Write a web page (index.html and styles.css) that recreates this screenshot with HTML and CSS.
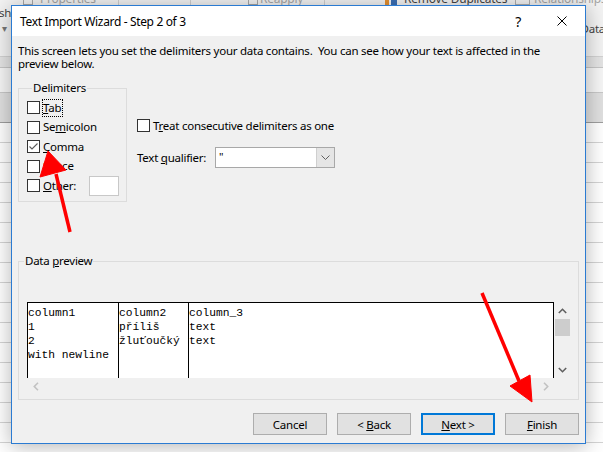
FILE: index.html
```html
<!DOCTYPE html>
<html lang="en">
<head>
<meta charset="utf-8">
<title>Text Import Wizard</title>
<link rel="stylesheet" href="styles.css">
</head>
<body>
<div class="app">
  <div class="ribbon">
    <div class="rb-labels">
      <div class="rb-cell"></div>
      <div class="rb-cell rb-props"><span class="rb-icon ico-gray"></span><span class="dis">Properties</span></div>
      <div class="rb-cell sep"></div>
      <div class="rb-cell sep"></div>
      <div class="rb-cell rb-reapply"><span class="rb-icon ico-gray"></span><span class="dis">Reapply</span></div>
      <div class="rb-cell sep"></div>
      <div class="rb-cell rb-dup"><span class="rb-icon ico-dup"></span><span class="en">Remove Duplicates</span></div>
      <div class="rb-cell rb-rel"><span class="rb-icon ico-rel"></span><span class="dis">Relationships</span></div>
    </div>
    <div class="rb-row2"><span class="rb-text">Refresh</span></div>
    <div class="rb-row3"><span class="rb-drop">&#9662;</span><span class="rb-text">Data</span></div>
  </div>
  <div class="formula"></div>
  <div class="namebar"></div>
  <div class="colhead"></div>
  <div class="grid"></div>
</div>

<div class="dialog">
  <div class="titlebar">
    <span class="title">Text Import Wizard - Step 2 of 3</span>
    <span class="tb-btn help">?</span>
    <span class="tb-btn close"><svg width="10" height="10" viewBox="0 0 10 10"><path d="M0.5 0.5L9.5 9.5M9.5 0.5L0.5 9.5" stroke="#000" stroke-width="1" fill="none"/></svg></span>
  </div>
  <div class="content">
    <p class="desc">This screen lets you set the delimiters your data contains.&nbsp; You can see how your text is affected in the<br>preview below.</p>
    <div class="options">
      <div class="group delims">
        <div class="group-label">Delimiters</div>
        <div class="rows">
          <div class="row"><span class="cb"></span><span class="lbl focus"><u>T</u>ab</span></div>
          <div class="row"><span class="cb"></span><span class="lbl">Se<u>m</u>icolon</span></div>
          <div class="row"><span class="cb"><svg width="11" height="11" viewBox="0 0 11 11"><path d="M1.5 5.5L4 8L9.5 2.5" fill="none" stroke="#5a5a5a" stroke-width="1.1"/></svg></span><span class="lbl"><u>C</u>omma</span></div>
          <div class="row"><span class="cb"></span><span class="lbl">S<u>p</u>ace</span></div>
          <div class="row"><span class="cb"></span><span class="lbl"><u>O</u>ther:</span><span class="textbox"></span></div>
        </div>
      </div>
      <div class="side">
        <div class="row"><span class="cb"></span><span class="lbl">T<u>r</u>eat consecutive delimiters as one</span></div>
        <div class="qual">
          <span class="qual-label">Text <u>q</u>ualifier:</span>
          <div class="combo">
            <span class="combo-val">"</span>
            <span class="combo-btn"><svg width="9" height="5" viewBox="0 0 9 5"><path d="M0.5 0.5L4.5 4.5L8.5 0.5" fill="none" stroke="#606060" stroke-width="1"/></svg></span>
          </div>
        </div>
      </div>
    </div>
    <div class="group preview">
      <div class="group-label">Data <u>p</u>review</div>
      <div class="pv">
        <div class="pv-data">
          <div class="col c1"><div>column1</div><div>1</div><div>2</div><div>with newline</div></div>
          <div class="col c2"><div>column2</div><div>příliš</div><div>žluťoučký</div></div>
          <div class="col c3"><div>column_3</div><div>text</div><div>text</div></div>
        </div>
        <div class="vscroll">
          <span class="sb-btn"><svg width="9" height="6" viewBox="0 0 9 6"><path d="M0.8 5L4.5 1.3L8.2 5" fill="none" stroke="#606060" stroke-width="1.6"/></svg></span>
          <span class="thumb"></span>
          <span class="sb-fill"></span>
          <span class="sb-btn"><svg width="9" height="6" viewBox="0 0 9 6"><path d="M0.8 1L4.5 4.7L8.2 1" fill="none" stroke="#606060" stroke-width="1.6"/></svg></span>
        </div>
        <div class="hscroll">
          <span class="sb-btn"><svg width="6" height="9" viewBox="0 0 6 9"><path d="M5 0.8L1.3 4.5L5 8.2" fill="none" stroke="#c2c2c2" stroke-width="1.6"/></svg></span>
          <span class="sb-btn"><svg width="6" height="9" viewBox="0 0 6 9"><path d="M1 0.8L4.7 4.5L1 8.2" fill="none" stroke="#c2c2c2" stroke-width="1.6"/></svg></span>
        </div>
        <div class="corner"></div>
      </div>
    </div>
    <div class="buttons">
      <button class="btn">Cancel</button>
      <button class="btn">&lt; <u>B</u>ack</button>
      <button class="btn default"><u>N</u>ext &gt;</button>
      <button class="btn"><u>F</u>inish</button>
    </div>
  </div>
</div>

<svg class="annot" width="603" height="452" viewBox="0 0 603 452">
  <g fill="#ff0000" stroke="#ff0000">
    <line x1="70" y1="232" x2="56" y2="174" stroke-width="3.5"/>
    <polygon points="48,151 40,177 66,170" stroke-width="1"/>
    <line x1="482" y1="293" x2="519" y2="381" stroke-width="3.5"/>
    <polygon points="510,386 530,375 532,402" stroke-width="1"/>
  </g>
</svg>
</body>
</html>
```

FILE: styles.css
```css
* { box-sizing: border-box; }
html, body { margin: 0; padding: 0; }
body {
  width: 603px;
  height: 452px;
  overflow: hidden;
  position: relative;
  font-family: "Noto Sans", sans-serif;
  font-size: 11.5px;
  letter-spacing: -0.25px;
  color: #000;
  background: #fff;
}

/* ---------- Excel window behind the dialog ---------- */
.app { display: flex; flex-direction: column; height: 452px; }
.ribbon {
  flex: none;
  height: 57px;
  background: #f3f3f3;
  border-bottom: 1px solid #d2d2d2;
  overflow: hidden;
}
.rb-labels {
  display: grid;
  grid-template-columns: 23px 95px 72px 58px 76px 61px 130px 88px;
  height: 16px;
  margin-top: -9px;
  line-height: 16px;
  font-size: 12px;
}
.rb-cell { display: flex; align-items: center; white-space: nowrap; overflow: hidden; height: 16px; }
.sep { border-left: 1px solid #d0d0d0; }
.dis { color: #a6a6a6; }
.en { color: #444; }
.rb-icon { flex: none; display: block; width: 10px; height: 12px; }
.ico-gray { border: 1px solid #a8a8a8; }
.rb-props .rb-icon { margin-right: 7px; }
.rb-reapply .rb-icon { margin-right: 2px; }
.ico-dup {
  width: 12px;
  margin-right: 7px;
  background: linear-gradient(to right, #e6902f 0 4px, transparent 4px 6px, #3a6fb5 6px 12px);
}
.ico-rel { width: 15px; margin-right: 4px; border: 1px solid #b0b0b0; }
.rb-row2 { width: 11px; height: 12px; display: flex; justify-content: flex-end; line-height: 12px; }
.rb-text { flex: none; color: #444; white-space: nowrap; }
.rb-row3 {
  height: 14px;
  display: flex;
  justify-content: space-between;
  align-items: center;
  padding: 0 0 0 2px;
  margin-top: 2px;
}
.rb-row3 .rb-text { margin-right: -2px; }
.rb-drop { color: #777; font-size: 10px; }
.formula { flex: none; height: 11px; background: #e4e4e4; border-bottom: 1px solid #c6c6c6; }
.namebar { flex: none; height: 24px; background: #f6f6f6; }
.colhead { flex: none; height: 31px; background: #e0e0e0; border-top: 1px solid #c8c8c8; border-bottom: 1px solid #9e9e9e; }
.grid {
  flex: 1;
  background: repeating-linear-gradient(to bottom, #fff 0 19px, #d4d4d4 19px 20px);
}

/* ---------- Dialog window ---------- */
.dialog {
  position: absolute;
  left: 11px;
  top: 5px;
  width: 575px;
  height: 439px;
  border: 1px solid #2b7bd2;
  background: #f0f0f0;
  box-shadow: 0 2px 20px rgba(0, 0, 0, 0.3);
  display: flex;
  flex-direction: column;
}
.titlebar {
  flex: none;
  height: 30px;
  background: #fff;
  display: flex;
  align-items: center;
  padding-left: 8px;
  font-size: 12px;
  letter-spacing: -0.35px;
}
.title { flex: 1; white-space: nowrap; }
.tb-btn {
  width: 46px;
  height: 30px;
  display: flex;
  align-items: center;
  justify-content: center;
}
.help { font-size: 14px; padding-left: 4px; }

.content { flex: 1; padding: 8px 6px 0 6px; }
.desc { margin: 0; line-height: 13px; white-space: nowrap; }

.options { display: flex; margin-top: 18px; }
.group { border: 1px solid #dcdcdc; }
.group-label {
  width: max-content;
  height: 14px;
  line-height: 14px;
  margin: -8px 0 0 5px;
  padding: 0 1px;
  background: #f0f0f0;
}
.delims { width: 109px; height: 114px; padding: 0 7px 0 8px; }
.rows { margin-top: 3px; }
.row { display: flex; align-items: center; height: 19.5px; }
.cb {
  flex: none;
  width: 13px;
  height: 13px;
  border: 1px solid #333;
  background: #fff;
  display: flex;
  align-items: center;
  justify-content: center;
  margin-right: 3px;
}
.lbl { white-space: nowrap; line-height: 14px; }
.focus { outline: 1px dotted #000; padding: 1px 1px 1px 0; }
.textbox {
  margin-left: auto;
  width: 30px;
  height: 20px;
  background: #fff;
  border: 1px solid #c8c8c8;
}

.side { margin-left: 10px; padding-top: 28px; }
.side .row { height: 19px; }
.qual { display: flex; align-items: center; height: 21px; margin-top: 12px; }
.qual-label { width: 78px; white-space: nowrap; }
.combo {
  width: 120px;
  height: 21px;
  border: 1px solid #a8a8a8;
  background: #fff;
  display: flex;
}
.combo-val { flex: 1; padding-left: 3px; line-height: 17px; font-size: 11px; }
.combo-btn {
  width: 18px;
  background: #e5e5e5;
  border-left: 1px solid #cfcfcf;
  display: flex;
  align-items: center;
  justify-content: center;
}

.preview { margin-top: 59px; height: 139px; }
.pv {
  margin: 34px 0 0 8px;
  display: grid;
  grid-template-columns: 527px 17px;
  grid-template-rows: 76px 17px;
}
.pv-data {
  display: flex;
  background: #fff;
  border: 1px solid #000;
  border-bottom: none;
  font-family: "Liberation Mono", monospace;
  font-size: 11.25px;
  letter-spacing: 0;
  line-height: 14px;
}
.col { padding-top: 3px; white-space: pre; }
.c1 { width: 91px; border-right: 1px solid #000; }
.c2 { width: 70px; border-right: 1px solid #000; }
.c3 { flex: 1; }
.vscroll { display: flex; flex-direction: column; }
.sb-btn { flex: none; width: 17px; height: 17px; display: flex; align-items: center; justify-content: center; }
.thumb { flex: none; height: 17px; margin: 0 1px; background: #cdcdcd; }
.sb-fill { flex: 1; }
.hscroll { display: flex; justify-content: space-between; }

.buttons { display: flex; justify-content: flex-end; gap: 10px; margin-top: 13px; }
.btn {
  width: 74px;
  height: 22px;
  margin: 0;
  padding: 0;
  border: 1px solid #adadad;
  background: #e1e1e1;
  font-family: inherit;
  font-size: 11.5px;
  letter-spacing: -0.25px;
  color: #000;
}
.default { border: 2px solid #0078d7; }

/* ---------- annotation arrows ---------- */
.annot { position: absolute; left: 0; top: 0; pointer-events: none; }
```
